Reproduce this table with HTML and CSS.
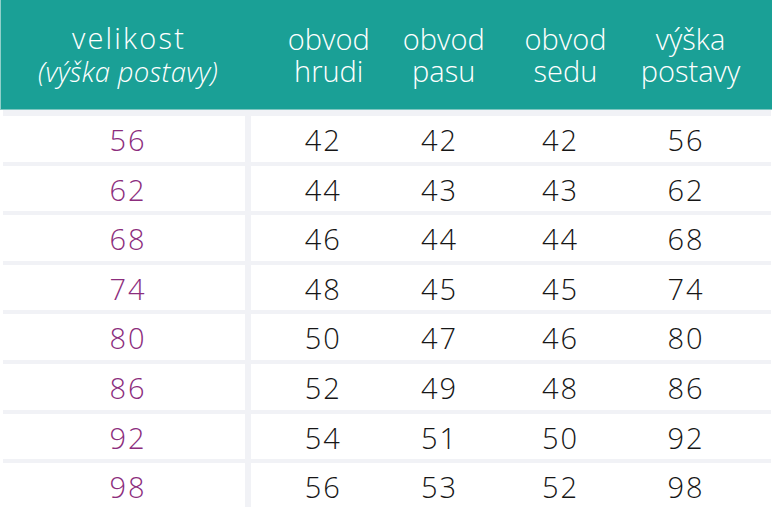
FILE: index.html
```html
<!DOCTYPE html>
<html lang="cs">
<head>
<meta charset="utf-8">
<title>Tabulka velikostí</title>
<link rel="stylesheet" href="styles.css">
</head>
<body>
<div class="sizes">
  <div class="head">
    <div class="hcell hsize"><span class="hmain">velikost</span><span class="hsub">(výška postavy)</span></div>
    <div class="hcell c2"><span class="hl">obvod</span><span class="hl">hrudi</span></div>
    <div class="hcell c3"><span class="hl">obvod</span><span class="hl">pasu</span></div>
    <div class="hcell c4"><span class="hl">obvod</span><span class="hl">sedu</span></div>
    <div class="hcell c5"><span class="hl">výška</span><span class="hl">postavy</span></div>
  </div>
  <div class="rows">
    <div class="row"><div class="size">56</div><div class="vals"><span class="c2">42</span><span class="c3">42</span><span class="c4">42</span><span class="c5">56</span></div></div>
    <div class="row"><div class="size">62</div><div class="vals"><span class="c2">44</span><span class="c3">43</span><span class="c4">43</span><span class="c5">62</span></div></div>
    <div class="row"><div class="size">68</div><div class="vals"><span class="c2">46</span><span class="c3">44</span><span class="c4">44</span><span class="c5">68</span></div></div>
    <div class="row"><div class="size">74</div><div class="vals"><span class="c2">48</span><span class="c3">45</span><span class="c4">45</span><span class="c5">74</span></div></div>
    <div class="row"><div class="size">80</div><div class="vals"><span class="c2">50</span><span class="c3">47</span><span class="c4">46</span><span class="c5">80</span></div></div>
    <div class="row"><div class="size">86</div><div class="vals"><span class="c2">52</span><span class="c3">49</span><span class="c4">48</span><span class="c5">86</span></div></div>
    <div class="row"><div class="size">92</div><div class="vals"><span class="c2">54</span><span class="c3">51</span><span class="c4">50</span><span class="c5">92</span></div></div>
    <div class="row"><div class="size">98</div><div class="vals"><span class="c2">56</span><span class="c3">53</span><span class="c4">52</span><span class="c5">98</span></div></div>
  </div>
</div>
</body>
</html>
```
FILE: styles.css
```css
html, body {
  margin: 0;
  padding: 0;
  background: #ffffff;
}
body {
  font-family: "Open Sans", "Liberation Sans", sans-serif;
  font-weight: 350;
  width: 772px;
  height: 507px;
  overflow: hidden;
}
.sizes {
  width: 772px;
}
.head {
  display: grid;
  grid-template-columns: 251px 129.5px 118.5px 123px 149px;
  background: #1aa096;
  border-left: 1px solid #8fd0ca;
  border-bottom: 1px solid #7fc7c1;
  box-sizing: border-box;
  color: #ffffff;
  height: 110px;
}
.hcell {
  display: flex;
  flex-direction: column;
  align-items: center;
  justify-content: center;
  text-align: center;
  font-size: 29px;
  white-space: nowrap;
  padding-top: 1px;
}
.hl {
  display: block;
  height: 32.5px;
  line-height: 32.5px;
}
.hsize {
  padding-left: 3px;
}
.hmain {
  display: block;
  font-size: 29px;
  letter-spacing: 2.2px;
  height: 33px;
  line-height: 33px;
  padding-left: 2px;
}
.hsub {
  display: block;
  font-size: 27.5px;
  font-style: italic;
  letter-spacing: 0.3px;
  height: 35px;
  line-height: 35px;
}
.head .c2 { padding-left: 24px; }
.head .c3 { padding-left: 6px; }
.head .c4 { padding-left: 8px; }
.head .c5 { padding-right: 14px; }
.rows {
  margin-left: 3px;
  width: 768px;
  padding-top: 6px;
  background: #f1f2f6;
  display: flex;
  flex-direction: column;
  gap: 6px;
}
.row {
  display: grid;
  grid-template-columns: 242px 520px;
  column-gap: 6px;
  height: 43.6px;
}
.size, .vals {
  background: #ffffff;
  font-size: 29px;
  letter-spacing: 2px;
  line-height: 43.6px;
  padding-top: 2px;
  box-sizing: border-box;
}
.size {
  color: #8c2d7d;
  text-align: center;
  padding-left: 8px;
}
.vals {
  display: grid;
  grid-template-columns: 129.5px 118.5px 123px 149px;
  color: #161616;
}
.vals span {
  display: flex;
  justify-content: center;
}
.vals .c2 { padding-left: 15px; }
.vals .c3 { padding-right: 0.5px; }
.vals .c4 { padding-right: 0px; }
.vals .c5 { padding-right: 21px; }
```
